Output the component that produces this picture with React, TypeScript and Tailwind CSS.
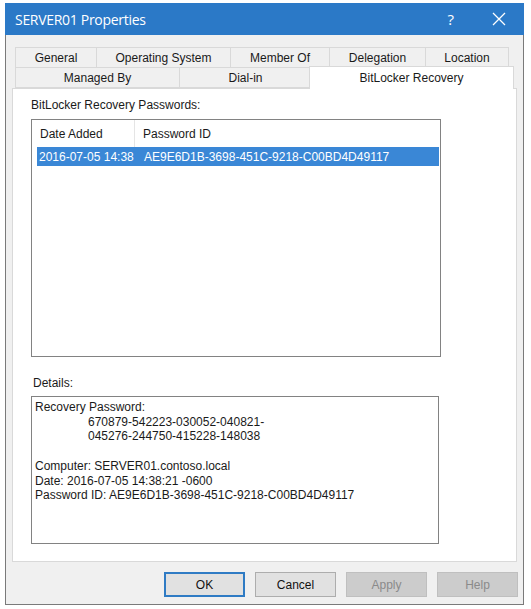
import React from "react";

const rowOne = [
  { label: "General", w: "w-[82px]" },
  { label: "Operating System", w: "w-[135px]" },
  { label: "Member Of", w: "w-[100px]" },
  { label: "Delegation", w: "w-[97px]" },
  { label: "Location", w: "w-[84px]" },
];

function Tab({ label, w }: { label: string; w: string }) {
  return (
    <div
      className={`${w} h-[21px] flex items-center justify-center border border-[#d9d9d9] -ml-px first:ml-0 bg-[#f0f0f0] text-[12px] text-[#1a1a1a]`}
    >
      {label}
    </div>
  );
}

function DialogButton({
  label,
  primary,
  disabled,
}: {
  label: string;
  primary?: boolean;
  disabled?: boolean;
}) {
  const look = disabled
    ? "bg-[#cccccc] border-[#bfbfbf] text-[#8a8a8a]"
    : primary
      ? "bg-[#e1e1e1] border-[#2f7bc4] border-2 text-[#111]"
      : "bg-[#e1e1e1] border-[#adadad] text-[#111]";
  return (
    <div
      className={`w-[81px] h-[25px] flex items-center justify-center border ${look} text-[12px]`}
    >
      {label}
    </div>
  );
}

export default function App() {
  return (
    <div className="w-[531px] h-[609px] bg-white pt-[3px] pl-[5px] font-['Liberation_Sans',Arial,sans-serif]">
      <div className="w-[519px] h-[602px] flex flex-col">
        {/* title bar */}
        <div className="h-[32px] bg-[#2b79c7] flex items-center pl-[10px] text-white">
          <span className="text-[14px] font-['Open_Sans',sans-serif] tracking-[-0.3px]">
            SERVER01 Properties
          </span>
          <span className="ml-auto text-[15px] font-['Open_Sans',sans-serif] mr-[38px]">
            ?
          </span>
          <svg width="14" height="14" viewBox="0 0 14 14" className="mr-[18px]">
            <path d="M1 1 L13 13 M13 1 L1 13" stroke="white" strokeWidth="1.3" />
          </svg>
        </div>

        {/* body */}
        <div className="flex-1 bg-[#f0f0f0] border-x border-b border-[#7a7a7a] flex flex-col pl-[6px] pr-[6px]">
          {/* tabs */}
          <div className="mt-[12px] pl-[3px] flex flex-col">
            <div className="flex">
              {rowOne.map((t) => (
                <Tab key={t.label} label={t.label} w={t.w} />
              ))}
            </div>
            <div className="flex items-end -mt-px">
              <Tab label="Managed By" w="w-[165px]" />
              <Tab label="Dial-in" w="w-[133px]" />
              <div className="relative z-10 -ml-[3px] -mb-px w-[205px] h-[23px] -mt-[2px] bg-white border border-b-0 border-[#d9d9d9] flex items-start justify-center pt-[2px] text-[12px] text-[#1a1a1a]">
                BitLocker Recovery
              </div>
            </div>
          </div>

          {/* panel */}
          <div className="w-[505px] h-[474px] bg-white border border-[#d9d9d9] pl-[18px] pt-[9px] text-[12px] text-[#1a1a1a]">
            <div className="h-[15px] leading-[15px]">BitLocker Recovery Passwords:</div>
            <div className="mt-[6px] w-[410px] h-[238px] border border-[#828282] bg-white">
              <div className="h-[27px] flex">
                <div className="w-[103px] border-r border-[#e5e5e5] pl-[8px] flex items-center">
                  Date Added
                </div>
                <div className="pl-[8px] flex items-center">Password ID</div>
              </div>
              <div className="ml-[5px] mr-px h-[19px] bg-[#3a87d6] text-white flex items-center">
                <span className="pl-[2px] w-[105px]">2016-07-05 14:38</span>
                <span className="pl-[2px]">AE9E6D1B-3698-451C-9218-C00BD4D49117</span>
              </div>
            </div>

            <div className="mt-[19px] pl-[2px] h-[15px] leading-[15px]">Details:</div>
            <div className="mt-[5px] w-[408px] h-[148px] border border-[#828282] bg-white pl-[3px] pt-[3px] leading-[14.7px]">
              <div>Recovery Password:</div>
              <div className="pl-[53px]">670879-542223-030052-040821-</div>
              <div className="pl-[53px]">045276-244750-415228-148038</div>
              <div className="h-[14.7px]" />
              <div>Computer: SERVER01.contoso.local</div>
              <div>Date: 2016-07-05 14:38:21 -0600</div>
              <div>Password ID: AE9E6D1B-3698-451C-9218-C00BD4D49117</div>
            </div>
          </div>

          {/* buttons */}
          <div className="mt-[10px] flex justify-end gap-[10px] pr-[0px] mr-[-1px]">
            <DialogButton label="OK" primary />
            <DialogButton label="Cancel" />
            <DialogButton label="Apply" disabled />
            <DialogButton label="Help" disabled />
          </div>
        </div>
      </div>
    </div>
  );
}
